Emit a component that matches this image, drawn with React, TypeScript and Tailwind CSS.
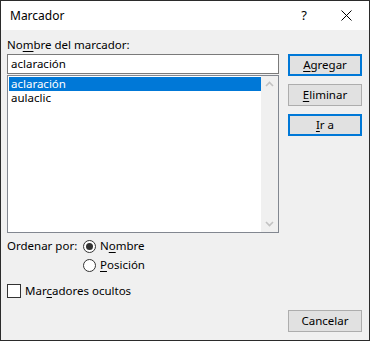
import React from "react";

function Btn({ label, k, rest, primary }: { label?: string; k?: string; rest?: string; primary?: boolean }) {
  return (
    <div
      className={
        "flex h-[22px] w-[74px] items-center justify-center bg-[#e1e1e1] text-[11.5px] text-black " +
        (primary ? "border-2 border-[#0078d7]" : "border border-[#adadad]")
      }
    >
      {k ? <span className="underline underline-offset-2">{k}</span> : null}
      <span>{rest ?? label}</span>
    </div>
  );
}

function Radio({ checked }: { checked?: boolean }) {
  return (
    <div className="flex h-[13px] w-[13px] items-center justify-center rounded-full border border-[#333] bg-white">
      {checked && <div className="h-[7px] w-[7px] rounded-full bg-[#333]" />}
    </div>
  );
}

export default function App() {
  return (
    <div
      className="flex h-[341px] w-[370px] flex-col border border-[#2b2b2b] bg-[#f0f0f0] text-[11.5px] text-black"
      style={{ fontFamily: '"Noto Sans", "Liberation Sans", sans-serif' }}
    >
      {/* barra de título */}
      <div className="flex h-[29px] items-center bg-white pl-[9px]">
        <span className="text-[12px]">Marcador</span>
        <span className="ml-auto mr-[34px] text-[13px]">?</span>
        <svg width="11" height="11" viewBox="0 0 11 11" className="mr-[17px]">
          <path d="M0.5 0.5 L10.5 10.5 M10.5 0.5 L0.5 10.5" stroke="#000" strokeWidth="1" />
        </svg>
      </div>

      <div className="flex flex-1 pl-[6px] pt-[7px]">
        {/* columna izquierda */}
        <div className="flex w-[272px] flex-col">
          <div className="h-[16px] leading-[16px]">
            No<span className="underline underline-offset-2">m</span>bre del marcador:
          </div>
          <div className="mt-[1px] flex h-[20px] items-center border border-[#7a7a7a] bg-white pl-[3px]">
            aclaración
          </div>
          <div className="mt-[1px] flex h-[158px] border border-[#828790] bg-white">
            <div className="flex-1 pl-[1px] pt-[1px]">
              <div className="h-[14px] overflow-hidden bg-[#0078d7] pl-[2px] leading-[14px] text-white">aclaración</div>
              <div className="h-[14px] overflow-hidden pl-[2px] leading-[14px]">aulaclic</div>
            </div>
            <div className="flex w-[17px] flex-col items-center justify-between bg-[#f0f0f0] py-[5px]">
              <svg width="9" height="6" viewBox="0 0 9 6">
                <path d="M1 5 L4.5 1.5 L8 5" stroke="#c2c2c2" strokeWidth="1.6" fill="none" />
              </svg>
              <svg width="9" height="6" viewBox="0 0 9 6">
                <path d="M1 1 L4.5 4.5 L8 1" stroke="#c2c2c2" strokeWidth="1.6" fill="none" />
              </svg>
            </div>
          </div>

          <div className="mt-[4px] flex">
            <div className="w-[76px] leading-[18px]">Ordenar por:</div>
            <div className="flex flex-col gap-[1px]">
              <div className="flex h-[18px] items-center gap-[4px]">
                <Radio checked />
                <span>
                  N<span className="underline underline-offset-2">o</span>mbre
                </span>
              </div>
              <div className="flex h-[18px] items-center gap-[4px]">
                <Radio />
                <span>
                  <span className="underline underline-offset-2">P</span>osición
                </span>
              </div>
            </div>
          </div>

          <div className="mt-[9px] flex h-[16px] items-center gap-[4px]">
            <div className="h-[14px] w-[14px] border border-[#333] bg-white" />
            <span>
              Mar<span className="underline underline-offset-2">c</span>adores ocultos
            </span>
          </div>
        </div>

        {/* columna derecha */}
        <div className="ml-[9px] flex flex-col pt-[17px]">
          <Btn k="A" rest="gregar" primary />
          <div className="h-[8px]" />
          <Btn k="E" rest="liminar" />
          <div className="h-[8px]" />
          <Btn k="I" rest="r a" primary />
          <div className="mb-[8px] mt-auto">
            <Btn label="Cancelar" />
          </div>
        </div>
      </div>
    </div>
  );
}
